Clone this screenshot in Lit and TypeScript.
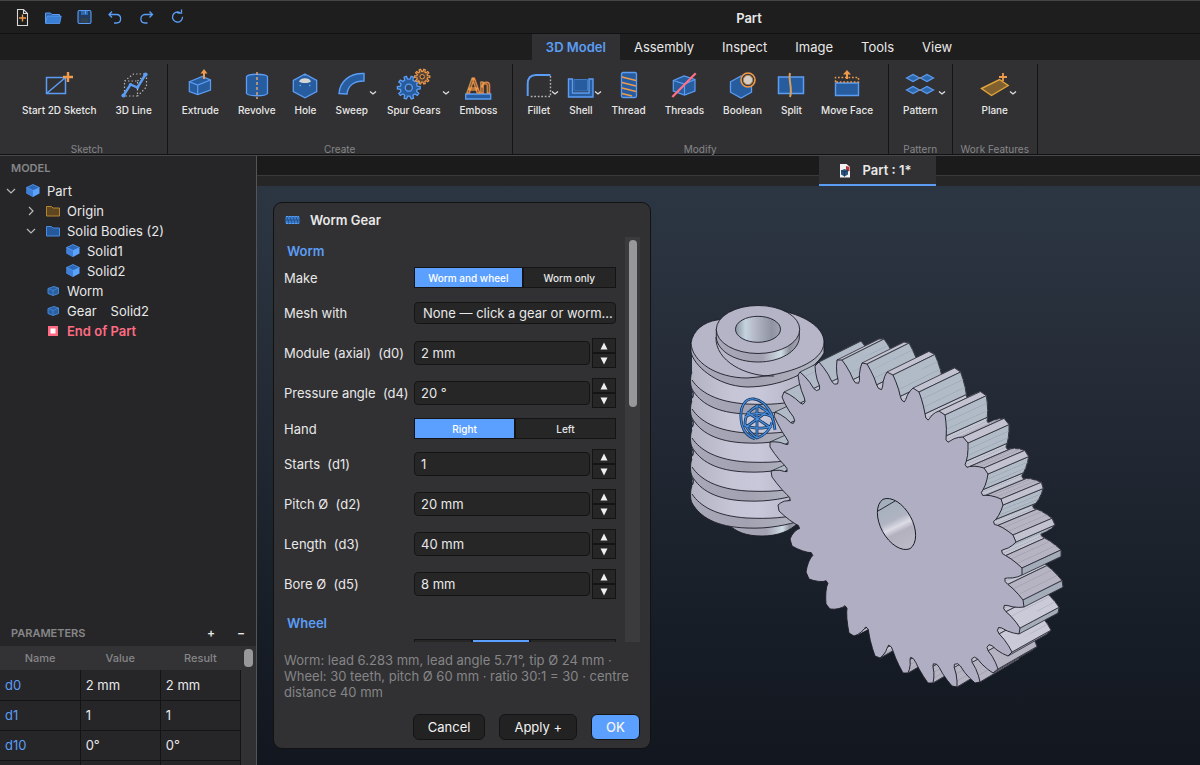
import { LitElement, html, css, svg, nothing } from "lit";
import { customElement, property, state } from "lit/decorators.js";
import { classMap } from "lit/directives/class-map.js";

type Pt = [number, number];

const BLUE = "#5b9df5";
const DEEP = "#275d9f";
const ORANGE = "#f09a4c";
const PINK = "#ff7086";

/* ---------- icons ---------- */

const gearPath = (cx: number, cy: number, r: number, inner: number, teeth: number) => {
  const pts: string[] = [];
  const step = (Math.PI * 2) / teeth;
  for (let i = 0; i < teeth; i++) {
    const a = i * step;
    const ring: Pt[] = [
      [-0.3, inner],
      [-0.17, r],
      [0.17, r],
      [0.3, inner],
    ];
    for (const [k, rad] of ring) {
      const t = a + k * step;
      pts.push(`${(cx + Math.cos(t) * rad).toFixed(1)} ${(cy + Math.sin(t) * rad).toFixed(1)}`);
    }
  }
  return `M${pts.join("L")}Z`;
};

const ribbonIcons: Record<string, unknown> = {
  sketch: svg`<path d="M5.5 9.5h19v16h-19zM5.5 25.5l19-16" fill="none" stroke=${BLUE} stroke-width="1.5"/>
    <path d="M27 4v10M22 9h10" stroke=${ORANGE} stroke-width="2.4"/>`,
  line: svg`<path d="M8.5 13h13v15h-13zM8.5 13l9-7h13v13l-9 9M21.5 13l9-7" fill="none" stroke="#b5b5b5" stroke-width="1.2" stroke-dasharray="1.4 2.1"/>
    <path d="M7.5 27.5l7-11 7 3 8-13" fill="none" stroke=${BLUE} stroke-width="2.4"/>
    <circle cx="7.5" cy="27.5" r="2.1" fill=${BLUE}/><circle cx="14.5" cy="16.5" r="1.6" fill=${BLUE}/><circle cx="21.5" cy="19.5" r="1.6" fill=${BLUE}/><circle cx="29.5" cy="6.5" r="2.1" fill=${BLUE}/>`,
  extrude: svg`<path d="M7.3 13.7L20.3 8.5l8.2 3.5v10L15.7 26.5l-8.4-3z" fill=${DEEP} stroke=${BLUE} stroke-width="1.2"/>
    <path d="M7.3 13.7l8.4 3.3 12.8-5M15.7 17v9.5" fill="none" stroke=${BLUE} stroke-width="1.2"/>
    <path d="M22 11V4" stroke=${ORANGE} stroke-width="2"/><path d="M18.5 5.5L22 1l3.5 4.5z" fill=${ORANGE}/>`,
  revolve: svg`<path d="M7.5 8.5c2-3 19-3 21 0v17c-2 3-19 3-21 0z" fill=${DEEP} stroke=${BLUE} stroke-width="1.3"/>
    <path d="M18 4v27" stroke="#d9a27a" stroke-width="1.5" stroke-dasharray="3 2"/>`,
  hole: svg`<path d="M18 6l11.7 6.5v11L18 29.7 6.3 23.5v-11z" fill=${DEEP} stroke=${BLUE} stroke-width="1.3"/>
    <path d="M12 13.5c1-4.5 11-4.5 12 0-3 2-9 2-12 0z" fill="#d5d5d5"/>
    <path d="M12.5 17.5H14M22 17.5h1.5M18 6v2" stroke=${BLUE} stroke-width="1.3"/>`,
  sweep: svg`<path d="M5 25.5C6 13 16 5 30 5.5V13c-9 0-16 4-17 13z" fill=${DEEP} stroke=${BLUE} stroke-width="1.4"/>`,
  spur: svg`<path d=${gearPath(12.8, 19.7, 11.5, 8.6, 10)} fill=${DEEP} stroke=${BLUE} stroke-width="1.3"/>
    <circle cx="12.8" cy="19.7" r="3.5" fill="#2c4a70" stroke=${BLUE} stroke-width="1.3"/>
    <path d=${gearPath(26.2, 8.7, 7.6, 5.4, 10)} fill="#5a4632" stroke=${ORANGE} stroke-width="1.2"/>
    <circle cx="26.2" cy="8.7" r="2.2" fill="#323234" stroke=${ORANGE}/>`,
  emboss: svg`<path d="M5.7 26h25v5h-25z" fill=${DEEP} stroke=${BLUE} stroke-width="1.3"/>
    <text x="18.5" y="25" text-anchor="middle" font-family="Roboto, sans-serif" font-size="20" fill="#6b4a2c" stroke=${ORANGE}>An</text>`,
  fillet: svg`<path d="M29.5 8v20.5H8" fill="none" stroke="#b5b5b5" stroke-width="1.4" stroke-dasharray="1.7 1.8"/>
    <path d="M6.7 28V16C6.7 10 10 7 15 7h14.5" fill="none" stroke=${BLUE} stroke-width="2"/>`,
  shell: svg`<path d="M5.5 11h4v14H26V11h4v18H5.5z" fill=${DEEP} stroke=${BLUE} stroke-width="1.4"/>
    <path d="M11 11.5h13.5V23H11z" fill=${DEEP} stroke="#3f79c4"/>`,
  thread: svg`<rect x="10.5" y="4.5" width="15" height="25" rx="1.5" fill=${DEEP} stroke=${BLUE} stroke-width="1.3"/>
    <path d="M11 9l14 3.5M11 14.5L25 18M11 20l14 3.5M11 25.5L21 28" stroke=${ORANGE} stroke-width="1.5"/>`,
  threads: svg`<path d="M7.3 12.5L18 8l11 3.5V23L18.5 27 7.3 23z" fill=${DEEP} stroke=${BLUE} stroke-width="1.2"/>
    <path d="M7.3 12.5L18.5 16 29 11.5M18.5 16v11" fill="none" stroke=${BLUE} stroke-width="1.2"/>
    <path d="M6.3 29L29.7 5.3" stroke=${PINK} stroke-width="2.2"/>`,
  boolean: svg`<path d="M16 8l10.5 5.8v10.4L16 30 5.5 24.2V13.8z" fill=${DEEP} stroke=${BLUE} stroke-width="1.3"/>
    <circle cx="23" cy="12" r="7" fill="#32363c" stroke=${ORANGE} stroke-width="1.6"/><circle cx="23" cy="12" r="4.7" fill="#d5cdc4" stroke="#b98550"/>`,
  split: svg`<rect x="5.5" y="9" width="25" height="16.5" fill=${DEEP} stroke=${BLUE} stroke-width="1.5"/>
    <path d="M17 5c-2 7 3 16 0 24" fill="none" stroke="#d9a05c" stroke-width="2"/>`,
  face: svg`<path d="M6.5 15h23v12.5h-23z" fill=${DEEP} stroke=${BLUE} stroke-width="1.4"/>
    <path d="M6.5 14V9.5h23V14z" fill="none" stroke=${ORANGE} stroke-width="1.5" stroke-dasharray="1.7 1.8"/>
    <path d="M18 11V5" stroke=${ORANGE} stroke-width="2"/><path d="M14 6.5L18 2l4 4.5z" fill=${ORANGE}/>`,
  pattern: svg`${[
    [11, 10],
    [25, 10],
    [11, 22],
    [25, 22],
  ].map(([x, y]) => svg`<path d="M${x - 6.5} ${y}l6.5-3.5 6.5 3.5-6.5 3.5z" fill="#2f68ad" stroke=${BLUE} stroke-width="1.2"/>`)}
    <path d="M16.5 10h3M16.5 22h3" stroke="#b58a70" stroke-width="1.2"/>`,
  plane: svg`<path d="M4.5 20.5L22.5 11.5l8.7 6L14.5 27.5z" fill="#80602f" stroke="#e2a43a" stroke-width="1.4"/>
    <path d="M26 5v8M22 9h8" stroke=${ORANGE} stroke-width="1.8"/>`,
};

const ribbonIcon = (name: string) =>
  html`<svg class="tool-icon" width="36" height="32" viewBox="0 0 36 32" aria-hidden="true">${ribbonIcons[name]}</svg>`;

const quickIcons: Array<{ label: string; art: unknown }> = [
  {
    label: "New",
    art: svg`<path d="M4.5 1.5h6l4 4v12h-10zM10.5 1.5v4h4" fill="none" stroke="#d8d8d8" stroke-width="1.1"/><path d="M9.5 6.5v7M6 10h7" stroke=${ORANGE} stroke-width="1.4"/>`,
  },
  {
    label: "Open",
    art: svg`<path d="M1.5 15V5h5L8 6.5h7.5V8" fill="#2c62a8" stroke=${BLUE}/><path d="M1.5 15.5L3.2 8h14l-1.5 7.5z" fill="#3b7fd4" stroke=${BLUE} stroke-width=".8"/>`,
  },
  {
    label: "Save",
    art: svg`<rect x="3" y="2.5" width="13" height="13" rx="1.5" fill="#233c5e" stroke=${BLUE} stroke-width="1.1"/><path d="M6 3h7v4H6z" fill="#3068b0"/><path d="M10.5 3v3" stroke=${BLUE}/><path d="M6 10.5h7.5V15H6z" fill="#32414f"/>`,
  },
  {
    label: "Undo",
    art: svg`<path d="M6 3.5L3 6.5l3 3M3.5 6.5h7c5.5 0 5.5 8.5 0 8.5H8" fill="none" stroke=${BLUE} stroke-width="1.3"/>`,
  },
  {
    label: "Redo",
    art: svg`<path d="M12.5 3.5l3 3-3 3M15 6.5H8c-5.5 0-5.5 8.5 0 8.5h2.5" fill="none" stroke=${BLUE} stroke-width="1.3"/>`,
  },
  {
    label: "Refresh",
    art: svg`<path d="M12 4.7a5 5 0 1 0 2.5 4M13.5 1.5v3.7h-4" fill="none" stroke=${BLUE} stroke-width="1.3"/>`,
  },
];

const treeIcons: Record<string, unknown> = {
  part: svg`<path d="M8 1.5L14.5 4.5v6L8 14 1.5 10.5v-6z" fill="#5ba2ff"/><path d="M1.5 4.5L8 7.5V14l-6.5-3.5z" fill="#3f7fd6"/><path d="M8 1.5L14.5 4.5 8 7.5 1.5 4.5z" fill="#2c68b5" stroke="#5ba2ff" stroke-width=".6"/>`,
  origin: svg`<path d="M1.5 13V3.5h5L8 5h6.5v8z" fill="#5d4620" stroke="#b5842f"/>`,
  bodies: svg`<path d="M1.5 13V3.5h5L8 5h6.5v8z" fill="#26599b" stroke="#4a8ae0"/>`,
  feature: svg`<path d="M3 5.5l6-2L13.5 5v5.5L8 12.5l-5-2z" fill="#2a5f9f" stroke="#4586d6"/><path d="M3 5.5L8 7.5 13.5 5M8 7.5v5" fill="none" stroke="#4586d6" stroke-width=".8"/>`,
  end: svg`<path d="M3 3h10v10H3z" fill="#ff6b82"/><path d="M5.5 5.5h5v5h-5z" fill="#fff"/>`,
};

const chevron = (open: boolean) => html`<svg class="twisty" width="12" height="12" viewBox="0 0 12 12" aria-hidden="true">
  <path d=${open ? "M2 4l4 4 4-4" : "M4 2l4 4-4 4"} fill="none" stroke="#b9b9b9" stroke-width="1.2" />
</svg>`;

/* ---------- ribbon data ---------- */

interface Tool {
  icon: string;
  label: string;
  menu?: boolean;
}

const ribbon: Array<{ title: string; tools: Tool[]; wide?: boolean }> = [
  {
    title: "Sketch",
    wide: true,
    tools: [
      { icon: "sketch", label: "Start 2D Sketch" },
      { icon: "line", label: "3D Line" },
    ],
  },
  {
    title: "Create",
    tools: [
      { icon: "extrude", label: "Extrude" },
      { icon: "revolve", label: "Revolve" },
      { icon: "hole", label: "Hole" },
      { icon: "sweep", label: "Sweep", menu: true },
      { icon: "spur", label: "Spur Gears", menu: true },
      { icon: "emboss", label: "Emboss" },
    ],
  },
  {
    title: "Modify",
    tools: [
      { icon: "fillet", label: "Fillet", menu: true },
      { icon: "shell", label: "Shell", menu: true },
      { icon: "thread", label: "Thread" },
      { icon: "threads", label: "Threads" },
      { icon: "boolean", label: "Boolean" },
      { icon: "split", label: "Split" },
      { icon: "face", label: "Move Face" },
    ],
  },
  { title: "Pattern", tools: [{ icon: "pattern", label: "Pattern", menu: true }] },
  { title: "Work Features", tools: [{ icon: "plane", label: "Plane", menu: true }] },
];

const tabs = ["3D Model", "Assembly", "Inspect", "Image", "Tools", "View"];

/* ---------- 3D model drawing ---------- */

// Worm wheel front face, clockwise. Each tooth: tip start, tip end, then the root of the gap that follows.
const wheel: Array<[number, number, number, number, number, number]> = [
  [862, 363, 867, 364, 880, 389],
  [887, 372, 893, 375, 903, 401],
  [913, 388, 919, 392, 927, 419],
  [939, 411, 945, 415, 947, 441],
  [963, 437, 968, 443, 966, 466],
  [984, 468, 988, 474, 982, 494],
  [1001, 499, 1003, 505, 994, 523],
  [1013, 535, 1016, 542, 1002, 552],
  [1022, 568, 1022, 575, 1005, 580],
  [1023, 600, 1024, 607, 1004, 607],
  [1020, 628, 1019, 634, 998, 629],
  [1012, 652, 1008, 656, 988, 646],
  [998, 669, 993, 673, 973, 658],
  [980, 682, 975, 683, 956, 664],
  [957, 687, 952, 686, 935, 664],
  [933, 683, 928, 683, 912, 658],
  [908, 673, 903, 673, 890, 646],
  [880, 658, 875, 656, 867, 628],
  [854, 636, 849, 633, 846, 607],
  [830, 609, 826, 604, 827, 582],
  [809, 579, 806, 572, 812, 554],
  [792, 546, 790, 539, 799, 527],
  [779, 511, 778, 505, 790, 499],
  [772, 477, 771, 471, 787, 470],
  [770, 447, 770, 442, 788, 443],
  [774, 416, 775, 412, 794, 422],
  [782, 397, 784, 392, 804, 403],
  [798, 375, 800, 372, 818, 390],
  [815, 366, 819, 362, 836, 384],
  [837, 360, 842, 360, 857, 383],
];

const sweepAt = (y: number): Pt => {
  if (y < 520) return [42 - (y - 360) / 80, -21 + ((y - 360) / 160) * 5];
  return [39, -16 - ((y - 520) / 160) * 7];
};

type Wall = "tip" | "trailing" | "root" | "leading";

// `wall` names the side wall that runs from this point to the next one.
interface EdgePoint {
  p: Pt;
  crease: boolean;
  wall: Wall;
}

const outline: EdgePoint[] = [];
wheel.forEach(([sx, sy, ex, ey, vx, vy], i) => {
  const [nx, ny] = wheel[(i + 1) % wheel.length];
  const tx = nx - ex;
  const ty = ny - ey;
  const tl = Math.hypot(tx, ty) || 1;
  const u: Pt = [tx / tl, ty / tl];
  const mx = (ex + nx) / 2;
  const my = (ey + ny) / 2;
  const dl = Math.hypot(mx - vx, my - vy);
  const o: Pt = [(mx - vx) / dl, (my - vy) / dl];
  const a: Pt = [vx - u[0] * 3.2 + o[0] * 3, vy - u[1] * 3.2 + o[1] * 3];
  const b: Pt = [vx + u[0] * 3.2 + o[0] * 3, vy + u[1] * 3.2 + o[1] * 3];
  const between = (p: Pt, q: Pt, t: number, push: number): Pt => [
    p[0] + (q[0] - p[0]) * t + u[0] * push,
    p[1] + (q[1] - p[1]) * t + u[1] * push,
  ];
  outline.push({ p: [sx, sy], crease: true, wall: "tip" });
  outline.push({ p: [ex, ey], crease: true, wall: "trailing" });
  outline.push({ p: between([ex, ey], a, 0.3, 0.9), crease: false, wall: "trailing" });
  outline.push({ p: between([ex, ey], a, 0.65, 1), crease: false, wall: "trailing" });
  outline.push({ p: a, crease: true, wall: "root" });
  outline.push({ p: [vx - u[0] * 1.6, vy - u[1] * 1.6], crease: false, wall: "root" });
  outline.push({ p: [vx + u[0] * 1.6, vy + u[1] * 1.6], crease: false, wall: "root" });
  outline.push({ p: b, crease: true, wall: "leading" });
  outline.push({ p: between(b, [nx, ny], 0.35, -1), crease: false, wall: "leading" });
  outline.push({ p: between(b, [nx, ny], 0.7, -0.9), crease: false, wall: "leading" });
});

const f = (n: number) => n.toFixed(1);
const add = (p: Pt, d: Pt): Pt => [p[0] + d[0], p[1] + d[1]];

const wallTone = (wall: Wall, y: number) => {
  if (wall === "tip") return y > 540 ? "#a3acb8" : "#c2c2d0";
  if (wall === "trailing") return y > 620 ? "#b4bcc9" : "#b1bac7";
  if (wall === "root") return "#c3c6d2";
  return y > 600 && y < 650 ? "#cbcad8" : "#b6b4c3";
};

// Side walls of the extruded wheel, farthest first so that nearer teeth cover them.
const wheelFaces = outline
  .map((a, i) => {
    const b = outline[(i + 1) % outline.length];
    const n: Pt = [b.p[1] - a.p[1], a.p[0] - b.p[0]];
    const d = sweepAt((a.p[1] + b.p[1]) / 2);
    const facing = n[0] * d[0] + n[1] * d[1];
    const depth = (a.p[0] + b.p[0]) * 41 - (a.p[1] + b.p[1]) * 18;
    return { a, b, facing, depth };
  })
  .filter((q) => q.facing > 0)
  .sort((p, q) => p.depth - q.depth)
  .map(({ a, b }) => {
    const a2 = add(a.p, sweepAt(a.p[1]));
    const b2 = add(b.p, sweepAt(b.p[1]));
    const fill = wallTone(a.wall, a.p[1]);
    const line = (p: Pt, q: Pt) => `M${f(p[0])} ${f(p[1])}L${f(q[0])} ${f(q[1])}`;
    return svg`<path d="M${f(a.p[0])} ${f(a.p[1])}L${f(b.p[0])} ${f(b.p[1])}L${f(b2[0])} ${f(b2[1])}L${f(a2[0])} ${f(a2[1])}Z" fill=${fill} stroke=${fill} stroke-width=".4"/>
      <path d="${line(a2, b2)}${a.crease ? line(a.p, a2) : ""}${b.crease ? line(b.p, b2) : ""}" fill="none" stroke="#1b1c26" stroke-width=".75"/>`;
  });

const facePath = `M${outline.map(({ p }) => `${f(p[0])} ${f(p[1])}`).join("L")}Z`;

// Height of each worm thread crest where it meets the left silhouette, one per turn.
const crests = [380, 409, 438, 467, 494];

const model = svg`
  <defs>
    <linearGradient id="shaft" x1="0" x2="1" y1="0" y2="0">
      <stop offset="0" stop-color="#b4b3c4"/><stop offset=".35" stop-color="#c6c5d6"/><stop offset=".6" stop-color="#c9c8da"/><stop offset="1" stop-color="#b3b2c4"/>
    </linearGradient>
    <linearGradient id="crest" x1="0" x2="1" y1="0" y2="0">
      <stop offset="0" stop-color="#a9a8b8"/><stop offset=".5" stop-color="#a3a2b2"/><stop offset="1" stop-color="#b3b6c2"/>
    </linearGradient>
    <linearGradient id="bore" x1="0" x2="1" y1="0" y2="0">
      <stop offset="0" stop-color="#8b96a4"/><stop offset=".22" stop-color="#c4d3de"/><stop offset=".4" stop-color="#b7bccb"/><stop offset=".8" stop-color="#8f93a2"/><stop offset="1" stop-color="#a0a3b0"/>
    </linearGradient>
    <linearGradient id="hub" x1="0" x2="1" y1="0" y2="0">
      <stop offset="0" stop-color="#a9a8b8"/><stop offset=".55" stop-color="#a3a2b2"/><stop offset=".78" stop-color="#cfdce4"/><stop offset=".88" stop-color="#8f919e"/><stop offset="1" stop-color="#a5a5b3"/>
    </linearGradient>
    <linearGradient id="wheelBore" gradientUnits="userSpaceOnUse" x1="886" y1="502" x2="907" y2="546">
      <stop offset="0" stop-color="#a3b0bc"/><stop offset=".4" stop-color="#b1b4c2"/><stop offset=".55" stop-color="#dcdbe6"/><stop offset=".68" stop-color="#b2b1bd"/><stop offset="1" stop-color="#b9b8c4"/>
    </linearGradient>
  </defs>
  <g stroke="#1b1c26" stroke-width=".9" stroke-linejoin="round">
    <path d="M728 524c8 8 18 12 34 12s28-5 36-13l-2-10h-68z" fill="url(#hub)"/>
    <path d="M692 352v148c8 16 26 28 56 28 24 0 46-5 56-12V350z" fill="url(#shaft)" stroke="none"/>
    ${crests.map(
      (y) => svg`<path d="M692 ${y - 8}c-2 4-2 13 0 17 8 14 24 24 55 25 22 1 40-3 56-8v-7c-16 5-34 6-56 5-31-2-47-12-55-24" fill="url(#crest)"/>`,
    )}
    ${crests.slice(0, 4).map((y) => svg`<path d="M691 ${y + 10}q4 3 1 8" fill="none" stroke="#26303c" stroke-width="1.5"/>`)}
    <path d="M691 341v11c2 12 24 34 56 35 32 0 66-14 77-34V340z" fill="url(#crest)"/>
    <path d="M691 343c2-13 13-21 26-23l60-10c26 4 47 17 47 32 0 20-34 33-77 36-30 0-55-16-56-35z" fill="#b7b6c8"/>
    <path d="M716 337c-1 24 30 40 58 39" fill="none"/>
    <path d="M716.3 329v9c2 14 20 24 42 24s40-11 41-24v-9z" fill="url(#hub)"/>
    <ellipse cx="758" cy="329.5" rx="41.7" ry="24" fill="#b5b4c7"/>
    <ellipse cx="758" cy="329.3" rx="22.5" ry="13" fill="url(#bore)"/>
  </g>
  <g stroke-linejoin="round">${wheelFaces}</g>
  <path d=${facePath} fill="#afaec3" stroke="#1b1c26" stroke-width=".9" stroke-linejoin="round"/>
  <path d="M883 499.3A28.2 16.8 61.3 0 1 910 548.7A28.2 16.8 61.3 0 1 883 499.3z" fill="url(#wheelBore)" stroke="#1b1c26"/>
  <path d="M878 511l17-10" stroke="#1b1c26" stroke-width=".9"/>
  ${["#16375f", "#4a90e0"].map(
    (c, i) => svg`<g fill="none" stroke=${c} stroke-width=${i ? 1.2 : 2.8}>
      <path d="M742 425c-4-18 3-27 12-26s17 11 19 20M742 425c2 7 7 12 13 14"/>
      <path d="M745 424c0-9 4-13 12-18h2c8 5 13 8 15 17l1 7M745 424c4 8 9 12 12 14 8-3 13-8 15-16"/>
      <path d="M745 417c8-5 20-4 28 0M744 425c8 4 20 4 28 1M746 427l22-16M747 412l24 16M757 405v32"/>
    </g>`,
  )}
`;

/* ---------- dialog ---------- */

@customElement("segment-choice")
class SegmentChoice extends LitElement {
  @property() name = "";
  @property() split = "even";
  @property({ type: Array }) options: string[] = [];
  @property({ type: Number }) selected = 0;

  static styles = css`
    :host {
      display: block;
    }
    .segments {
      display: grid;
      gap: 2px;
      height: 21px;
      padding: 1px;
      box-sizing: border-box;
      background: #141415;
    }
    .even {
      grid-template-columns: 1fr 1fr;
    }
    .lead {
      grid-template-columns: 7fr 6fr;
    }
    .trio {
      grid-template-columns: 2fr 2fr 3fr;
    }
    .segment {
      display: grid;
      place-items: center;
      background: #262627;
      color: #e6e6e6;
      font-size: 10px;
      font-weight: 500;
      white-space: nowrap;
    }
    .segment:has(input:checked) {
      background: #5b9fff;
      color: #fff;
    }
    input {
      appearance: none;
      position: absolute;
      margin: 0;
      width: 1px;
      height: 1px;
      opacity: 0;
    }
  `;

  render() {
    return html`<div
      class=${classMap({ segments: true, [this.split]: true })}
      role="radiogroup"
      aria-label=${this.name}
    >
      ${this.options.map(
        (o, i) => html`<label class="segment"><input type="radio" name=${this.name} .checked=${i === this.selected} />${o}</label>`,
      )}
    </div>`;
  }
}

interface Field {
  id: string;
  label: string;
  value: string;
}

@customElement("worm-dialog")
class WormDialog extends LitElement {
  static styles = css`
    :host {
      display: block;
      box-sizing: border-box;
      background: #313133;
      border: 1px solid #121213;
      border-radius: 9px;
      padding: 0 10px 8px;
      color: #e8e8e8;
      font-size: 13px;
    }
    .title {
      display: flex;
      align-items: center;
      gap: 9px;
      height: 33px;
      margin: 0 0 1px;
      font-size: 13px;
      font-weight: 600;
    }
    .scroller {
      display: flex;
      justify-content: space-between;
      height: 405px;
      overflow: hidden;
    }
    .form {
      display: flex;
      flex-direction: column;
      gap: 10px;
      width: 332px;
    }
    .heading {
      flex: none;
      margin: 0;
      padding: 8px 3px 0;
      font-size: 13px;
      line-height: 12px;
      font-weight: 600;
      color: #5b9df5;
    }
    .row {
      flex: none;
      display: grid;
      grid-template-columns: 130px minmax(0, 1fr);
      align-items: center;
      min-height: 21px;
    }
    .tall {
      min-height: 30px;
    }
    .label {
      white-space: pre;
    }
    .mesh {
      height: 22px;
      padding: 0 0 0 8px;
      text-align: left;
      font: inherit;
      color: #e8e8e8;
      background: #262627;
      border: 1px solid #141415;
      border-radius: 4px;
      white-space: nowrap;
    }
    .control {
      display: flex;
      align-items: center;
      gap: 2px;
    }
    .text {
      flex: 1;
      min-width: 0;
      height: 24px;
      box-sizing: border-box;
      padding: 0 6px;
      font: inherit;
      color: #e8e8e8;
      background: #262627;
      border: 1px solid #141415;
      border-radius: 4px;
    }
    .steps {
      flex: none;
      display: grid;
      grid-template-rows: 15px 15px;
      width: 24px;
    }
    .step {
      display: grid;
      place-items: center;
      padding: 0;
      background: #262627;
      border: 1px solid #141415;
    }
    .track {
      flex: none;
      width: 15px;
      box-sizing: border-box;
      padding: 3px 3px 0 4px;
      background: #3b3b3d;
    }
    .thumb {
      height: 167px;
      border-radius: 4px;
      background: #98989a;
    }
    .info {
      margin: 0;
      padding: 10px 0 14px;
      width: 345px;
      line-height: 16px;
      color: #858587;
    }
    .actions {
      display: flex;
      justify-content: flex-end;
      gap: 14px;
    }
    .action {
      height: 26px;
      padding: 0 14px;
      font: inherit;
      color: #f2f2f2;
      background: #222223;
      border: 1px solid #141415;
      border-radius: 6px;
    }
    .primary {
      background: #5b9fff;
      font-weight: 500;
    }
  `;

  private field({ id, label, value }: Field) {
    return html`<div class="row tall">
      <label class="label" for=${id}>${label}  (${id})</label>
      <div class="control">
        <input class="text" id=${id} .value=${value} />
        <div class="steps">
          <button class="step" aria-label="Increase">
            <svg width="8" height="8" viewBox="0 0 8 8"><path d="M4 .5L7.5 7.5h-7z" fill="#f0f0f0" /></svg>
          </button>
          <button class="step" aria-label="Decrease">
            <svg width="8" height="8" viewBox="0 0 8 8"><path d="M4 7.5L7.5 .5h-7z" fill="#f0f0f0" /></svg>
          </button>
        </div>
      </div>
    </div>`;
  }

  render() {
    return html`
      <h2 class="title">
        <svg width="17" height="10" viewBox="0 0 17 10" aria-hidden="true">
          <rect x="1.5" y="1" width="14" height="8" rx="1.5" fill="#3a7dce" />
          <path d="M0 5h17M3 2l2 6M6 2l2 6M9 2l2 6M12 2l2 6" stroke="#1f4a80" stroke-width=".8" />
          <path d="M2 1.5h13M2 8.5h13" stroke="#5b9df5" stroke-dasharray="2 1" />
        </svg>
        <span>Worm Gear</span>
      </h2>
      <div class="scroller">
        <div class="form">
          <h3 class="heading">Worm</h3>
          <div class="row">
            <span class="label">Make</span>
            <segment-choice name="Make" split="lead" .options=${["Worm and wheel", "Worm only"]}></segment-choice>
          </div>
          <div class="row tall">
            <span class="label">Mesh with</span>
            <button class="mesh">None — click a gear or worm...</button>
          </div>
          ${[
            { id: "d0", label: "Module (axial)", value: "2 mm" },
            { id: "d4", label: "Pressure angle", value: "20 °" },
          ].map((x) => this.field(x))}
          <div class="row">
            <span class="label">Hand</span>
            <segment-choice name="Hand" .options=${["Right", "Left"]}></segment-choice>
          </div>
          ${[
            { id: "d1", label: "Starts", value: "1" },
            { id: "d2", label: "Pitch Ø", value: "20 mm" },
            { id: "d3", label: "Length", value: "40 mm" },
            { id: "d5", label: "Bore Ø", value: "8 mm" },
          ].map((x) => this.field(x))}
          <h3 class="heading">Wheel</h3>
          <div class="row">
            <span></span>
            <segment-choice name="Wheel" split="trio" .options=${["", "", ""]} .selected=${1}></segment-choice>
          </div>
        </div>
        <div class="track"><div class="thumb"></div></div>
      </div>
      <p class="info">
        Worm: lead 6.283 mm, lead angle 5.71°, tip Ø 24 mm · Wheel: 30 teeth, pitch Ø 60 mm · ratio 30:1 = 30 · centre distance 40 mm
      </p>
      <div class="actions">
        <button class="action">Cancel</button>
        <button class="action">Apply +</button>
        <button class="action primary">OK</button>
      </div>
    `;
  }
}

/* ---------- shell ---------- */

interface TreeNode {
  depth: number;
  icon: string;
  label: string;
  note?: string;
  open?: boolean;
  end?: boolean;
}

const tree: TreeNode[] = [
  { depth: 0, icon: "part", label: "Part", open: true },
  { depth: 1, icon: "origin", label: "Origin", open: false },
  { depth: 1, icon: "bodies", label: "Solid Bodies (2)", open: true },
  { depth: 2, icon: "part", label: "Solid1" },
  { depth: 2, icon: "part", label: "Solid2" },
  { depth: 1, icon: "feature", label: "Worm" },
  { depth: 1, icon: "feature", label: "Gear", note: "Solid2" },
  { depth: 1, icon: "end", label: "End of Part", end: true },
];

@customElement("app-root")
class AppRoot extends LitElement {
  @state() private tab = "3D Model";

  static styles = css`
    :host {
      --overhang: 298px;
      display: flex;
      flex-direction: column;
      height: 100vh;
      overflow: hidden;
      box-sizing: border-box;
      border-top: 1px solid #454545;
      background: #1e1e1e;
      color: #e8e8e8;
      font-family: Inter, sans-serif;
      font-size: 13px;
    }
    button {
      font: inherit;
      color: inherit;
      background: none;
      border: 0;
      padding: 0;
    }
    .titlebar {
      display: grid;
      grid-template-columns: 1fr auto 1fr;
      align-items: center;
      height: 32px;
      margin-right: calc(-1 * var(--overhang));
      border-bottom: 1px solid #111;
    }
    .quick {
      display: flex;
      padding-left: 7px;
    }
    .quick-button {
      display: grid;
      place-items: center;
      width: 31px;
      height: 24px;
    }
    .doc-title {
      margin: 0;
      padding-top: 2px;
      font-size: 13px;
      font-weight: 600;
    }
    .tabs {
      display: flex;
      justify-content: center;
      height: 26px;
      margin-right: calc(-1 * var(--overhang));
    }
    .tab {
      padding: 0 14px;
    }
    .tab.active {
      background: #313133;
      color: #5b9df5;
      font-weight: 600;
    }
    .ribbon {
      display: flex;
      height: 95px;
      padding-top: 4px;
      box-sizing: border-box;
      background: #313133;
      border-bottom: 1px solid #111;
    }
    .group {
      display: flex;
      flex-direction: column;
      justify-content: space-between;
      padding: 4px 6px 0 5px;
      border-right: 1px solid #141415;
    }
    .group.wide {
      padding-left: 13px;
    }
    .tools {
      display: flex;
      justify-content: center;
      gap: 1px;
    }
    .tool {
      position: relative;
      display: flex;
      flex-direction: column;
      align-items: center;
      gap: 2px;
      padding: 0 9px;
      font-size: 10px;
      line-height: 16px;
      font-weight: 500;
      white-space: nowrap;
    }
    .tool-icon {
      margin: 0 -9px;
    }
    .menu-mark {
      position: absolute;
      right: 0;
      top: 22px;
    }
    .group-title {
      text-align: center;
      font-size: 10px;
      line-height: 10px;
      color: #868688;
      padding: 0 2px;
    }
    .main {
      flex: 1;
      min-height: 0;
      display: flex;
      border-top: 1px solid #48484a;
    }
    .sidebar {
      flex: none;
      display: flex;
      flex-direction: column;
      width: 256px;
      background: #262628;
      border-right: 1px solid #555558;
    }
    .panel-title {
      margin: 0;
      padding: 0 11px;
      font-size: 11px;
      line-height: 24px;
      font-weight: 600;
      color: #868688;
    }
    .tree {
      flex: 1;
      min-height: 0;
      margin: 0;
      padding: 1px 0 0;
      list-style: none;
    }
    .node {
      display: flex;
      align-items: center;
      height: 20px;
      padding-left: 5px;
    }
    .depth1 {
      padding-left: 25px;
    }
    .depth2 {
      padding-left: 45px;
    }
    .twisty,
    .no-twisty {
      flex: none;
      width: 12px;
      margin-right: 8px;
    }
    .node-icon {
      flex: none;
      margin-right: 6px;
    }
    .note {
      margin-left: 14px;
    }
    .end {
      color: #ff6b82;
      font-weight: 600;
    }
    .params-head {
      display: flex;
      align-items: center;
      justify-content: space-between;
      height: 26px;
    }
    .mini {
      width: 30px;
      font-size: 12px;
      font-weight: 600;
      line-height: 24px;
    }
    .params {
      display: flex;
      height: 119px;
      overflow: hidden;
    }
    .table {
      width: 100%;
      table-layout: fixed;
      border-collapse: collapse;
      align-self: flex-start;
    }
    .table th {
      height: 24px;
      padding: 0;
      font-size: 11px;
      font-weight: 500;
      color: #868688;
      background: #333335;
    }
    .table td {
      box-sizing: border-box;
      height: 30px;
      line-height: 16px;
      padding: 0 5px;
      border-bottom: 1px solid #141415;
      border-right: 1px solid #141415;
    }
    .table .name {
      color: #5b9df5;
    }
    .param-track {
      flex: none;
      width: 15px;
      box-sizing: border-box;
      padding: 3px;
      background: #313133;
    }
    .param-thumb {
      height: 18px;
      border-radius: 4px;
      background: #98989a;
    }
    .workspace {
      position: relative;
      flex: 1;
      min-width: 0;
      display: flex;
      flex-direction: column;
    }
    .docs {
      flex: none;
      display: flex;
      justify-content: center;
      height: 30px;
      margin-right: calc(-1 * var(--overhang));
      background: linear-gradient(#1b1b1c 19px, #3a3a3b 19px, #3a3a3b 20px, #262627 20px);
    }
    .doc {
      display: flex;
      align-items: center;
      gap: 12px;
      padding: 0 25px 0 20px;
      background: #313133;
      border-bottom: 2px solid #5b9df5;
      font-weight: 600;
    }
    .view {
      flex: 1;
      min-height: 0;
      overflow: hidden;
      background: linear-gradient(#2c3643, #242b36 35%, #161c25 80%, #12171f);
    }
    .scene {
      display: block;
    }
    .dialog {
      position: absolute;
      left: 16px;
      top: 46px;
      width: 378px;
    }
  `;

  private tool(t: Tool) {
    return html`<button class="tool">
      ${ribbonIcon(t.icon)}<span>${t.label}</span>
      ${t.menu
        ? html`<svg class="menu-mark" width="8" height="6" viewBox="0 0 8 6" aria-hidden="true">
            <path d="M1 1.5l3 2.5 3-2.5" fill="none" stroke="#e0e0e0" stroke-width="1.3" />
          </svg>`
        : nothing}
    </button>`;
  }

  private node(n: TreeNode) {
    return html`<li class=${classMap({ node: true, depth1: n.depth === 1, depth2: n.depth === 2 })}>
      ${n.open === undefined ? html`<span class="no-twisty"></span>` : chevron(n.open)}
      <svg class="node-icon" width="16" height="16" viewBox="0 0 16 16" aria-hidden="true">${treeIcons[n.icon]}</svg>
      <span class=${n.end ? "end" : ""}>${n.label}</span>
      ${n.note ? html`<span class="note">${n.note}</span>` : nothing}
    </li>`;
  }

  render() {
    return html`
      <header class="titlebar">
        <div class="quick">
          ${quickIcons.map(
            (q) => html`<button class="quick-button" aria-label=${q.label}>
              <svg width="19" height="19" viewBox="0 0 19 19">${q.art}</svg>
            </button>`,
          )}
        </div>
        <h1 class="doc-title">Part</h1>
        <span></span>
      </header>
      <nav class="tabs">
        ${tabs.map(
          (t) => html`<button class=${classMap({ tab: true, active: t === this.tab })} @click=${() => (this.tab = t)}>${t}</button>`,
        )}
      </nav>
      <div class="ribbon">
        ${ribbon.map(
          (g) => html`<section class=${classMap({ group: true, wide: !!g.wide })}>
            <div class="tools">${g.tools.map((t) => this.tool(t))}</div>
            <div class="group-title">${g.title}</div>
          </section>`,
        )}
      </div>
      <div class="main">
        <aside class="sidebar">
          <h2 class="panel-title">MODEL</h2>
          <ul class="tree">
            ${tree.map((n) => this.node(n))}
          </ul>
          <div class="params-head">
            <h2 class="panel-title">PARAMETERS</h2>
            <div><button class="mini">+</button><button class="mini">−</button></div>
          </div>
          <div class="params">
            <table class="table">
              <thead>
                <tr>
                  <th>Name</th>
                  <th>Value</th>
                  <th>Result</th>
                </tr>
              </thead>
              <tbody>
                ${[
                  ["d0", "2 mm"],
                  ["d1", "1"],
                  ["d10", "0°"],
                  ["", ""],
                ].map(
                  ([n, v]) => html`<tr>
                    <td class="name">${n}</td>
                    <td>${v}</td>
                    <td>${v}</td>
                  </tr>`,
                )}
              </tbody>
            </table>
            <div class="param-track"><div class="param-thumb"></div></div>
          </div>
        </aside>
        <main class="workspace">
          <div class="docs">
            <div class="doc">
              <svg width="12" height="15" viewBox="0 0 12 15" aria-hidden="true">
                <path d="M1 1h6.5L11 4v10.5H1z" fill="#f2f2f2" />
                <path d="M7 3l3.5 1v4L7 9z" fill="#b5363c" />
                <path d="M2 7.5L5.5 6 9 7.5v4L5.5 13.5 2 11.5z" fill="#2a567f" />
                <path d="M2 7.5L5.5 9 9 7.5M5.5 9v4.5" fill="none" stroke="#15304c" stroke-width=".8" />
              </svg>
              <span>Part : 1*</span>
            </div>
          </div>
          <div class="view">
            <svg class="scene" width="943" height="579" viewBox="257 186 943 579" role="img" aria-label="Worm and wheel">${model}</svg>
          </div>
          <worm-dialog class="dialog"></worm-dialog>
        </main>
      </div>
    `;
  }
}
